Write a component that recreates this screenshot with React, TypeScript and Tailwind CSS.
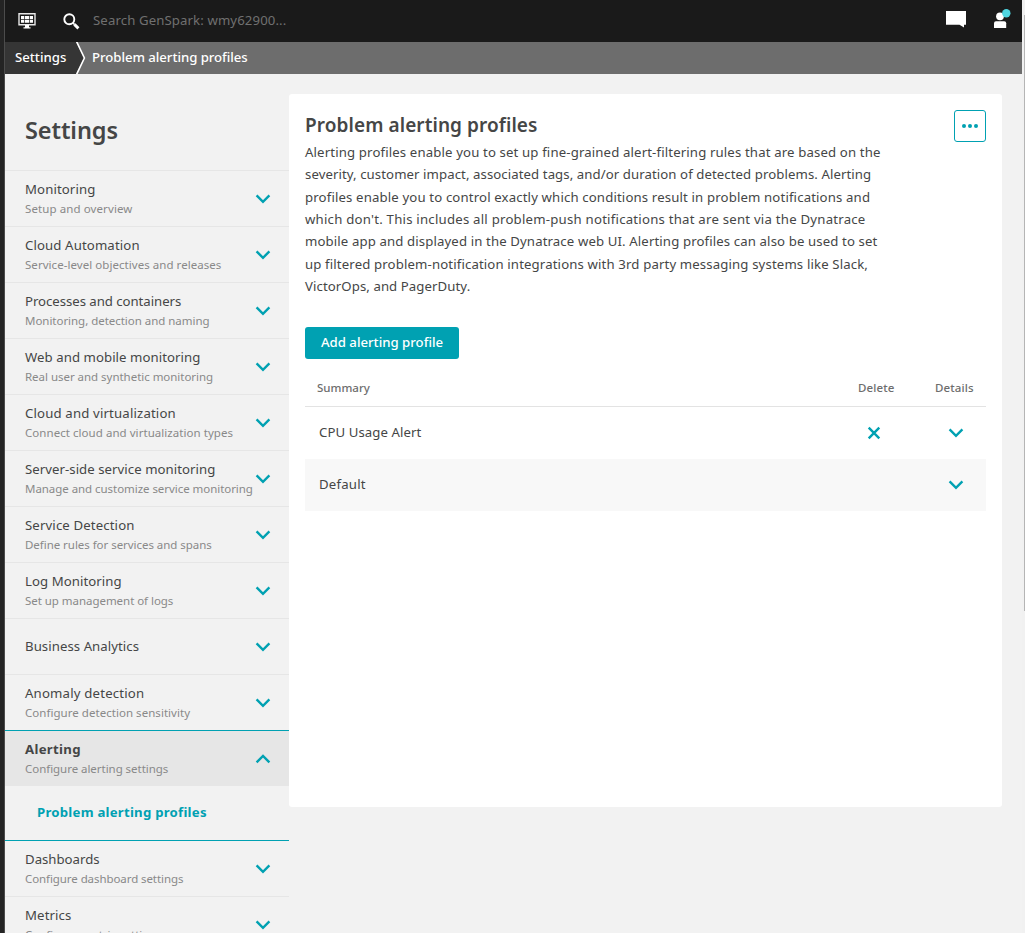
import React from "react";

type Item = { title: string; sub?: string; open?: boolean; after?: boolean; t?: string; s?: string };

const items: Item[] = [
  { title: "Monitoring", sub: "Setup and overview", t: "tracking-[0.1px]", s: "tracking-[0.1px]" },
  { title: "Cloud Automation", sub: "Service-level objectives and releases", t: "tracking-[0.12px]", s: "tracking-[0.05px]" },
  { title: "Processes and containers", sub: "Monitoring, detection and naming", t: "tracking-[-0.04px]", s: "tracking-[-0.03px]" },
  { title: "Web and mobile monitoring", sub: "Real user and synthetic monitoring", t: "tracking-[0.06px]", s: "tracking-[-0.03px]" },
  { title: "Cloud and virtualization", sub: "Connect cloud and virtualization types", t: "tracking-[0.16px]", s: "tracking-[0.05px]" },
  { title: "Server-side service monitoring", sub: "Manage and customize service monitoring", t: "tracking-[0.05px]", s: "tracking-[-0.05px]" },
  { title: "Service Detection", sub: "Define rules for services and spans", t: "tracking-[0.13px]", s: "tracking-[-0.04px]" },
  { title: "Log Monitoring", sub: "Set up management of logs", t: "tracking-[0.06px]", s: "tracking-[-0.04px]" },
  { title: "Business Analytics", t: "tracking-[0.06px]" },
  { title: "Anomaly detection", sub: "Configure detection sensitivity", t: "tracking-[0.18px]", s: "tracking-[0.04px]" },
  { title: "Alerting", sub: "Configure alerting settings", open: true, t: "tracking-[0.3px]", s: "tracking-[-0.04px]" },
  { title: "Dashboards", sub: "Configure dashboard settings", after: true, s: "tracking-[-0.08px]" },
  { title: "Metrics", sub: "Configure metric settings", t: "tracking-[0.12px]" },
];

const description = [
  { text: "Alerting profiles enable you to set up fine-grained alert-filtering rules that are based on the", t: "tracking-[0.138px]" },
  { text: "severity, customer impact, associated tags, and/or duration of detected problems. Alerting", t: "tracking-[0.08px]" },
  { text: "profiles enable you to control exactly which conditions result in problem notifications and", t: "tracking-[0.143px]" },
  { text: "which don't. This includes all problem-push notifications that are sent via the Dynatrace", t: "tracking-[0.227px]" },
  { text: "mobile app and displayed in the Dynatrace web UI. Alerting profiles can also be used to set", t: "tracking-[0.12px]" },
  { text: "up filtered problem-notification integrations with 3rd party messaging systems like Slack,", t: "tracking-[0.135px]" },
  { text: "VictorOps, and PagerDuty.", t: "tracking-[0.08px]" },
];

function Chevron({ up = false }: { up?: boolean }) {
  return (
    <svg width="16" height="10" viewBox="0 0 16 10" className="shrink-0" fill="none" stroke="#00a1b2" strokeWidth="2.4">
      <path d={up ? "M1.6 8.4 8 2l6.4 6.4" : "M1.6 1.4 8 7.8l6.4-6.4"} />
    </svg>
  );
}

function SideItem({ item }: { item: Item }) {
  const border = item.open || item.after ? "border-[#00a1b2]" : "border-[#e6e6e6]";
  return (
    <li>
      <button
        className={`flex h-14 w-full items-center justify-between border-t pr-[18px] pl-5 text-left ${border} ${item.open ? "bg-[#e6e6e6]" : ""}`}
      >
        <span className="flex flex-col whitespace-nowrap">
          <span className={`text-[13.2px] leading-5 ${item.t ?? ""} ${item.open ? "font-bold" : ""} ${item.sub ? "" : "pb-0.5"}`}>
            {item.title}
          </span>
          {item.sub && <span className={`w-0 text-[11.5px] leading-5 text-[#898989] ${item.s ?? ""}`}>{item.sub}</span>}
        </span>
        <Chevron up={item.open} />
      </button>
      {item.open && (
        <a className="flex h-[54px] items-center pl-8 text-[13.2px] font-bold tracking-[0.24px] whitespace-nowrap text-[#00a1b2]">
          Problem alerting profiles
        </a>
      )}
    </li>
  );
}

function Header() {
  return (
    <header className="flex h-[42px] shrink-0 items-center bg-[#1a1a1a] text-white">
      <svg className="ml-[13px]" width="18" height="16" viewBox="0 0 18 16" fill="none">
        <path d="M1 .8h16v11H1z" stroke="#e8e8e8" strokeWidth="1.4" />
        <path d="M3 3h3v3H3zM6.700 3H11v3H6.700zM11.700 3H15v3h-3.300zM3 6.800h3v2.900H3zM6.700 6.800H11v2.900H6.700zM11.700 6.800H15v2.900h-3.300zM7 12h4v2.200h1.500v1.300h-7v-1.300H7z" fill="#fff" />
      </svg>
      <svg className="ml-[27px]" width="17" height="17" viewBox="0 0 17 17" fill="none" stroke="#fff">
        <circle cx="6.300" cy="6.300" r="5" strokeWidth="1.900" />
        <path d="m9.800 9.800 1.800 1.800" strokeWidth="1.600" />
        <path d="m11.400 11.400 4 4" strokeWidth="2.900" />
      </svg>
      <span className="ml-[13px] text-[13.2px] tracking-[0.11px] whitespace-nowrap text-[#707070]">
        Search GenSpark: wmy62900...
      </span>
      <svg className="mt-[-4px] ml-auto" width="20" height="17" viewBox="0 0 20 17" fill="#fff">
        <path d="M0 0h20v13.800h-2V16.500l-4.500-2.700H0z" />
      </svg>
      <svg className="mt-[-5px] mr-[11px] ml-[28px]" width="17" height="20" viewBox="0 0 17 20">
        <circle cx="6" cy="7.300" r="3.900" fill="#fff" />
        <path d="M0 19v-4.800Q0 12.200 2 12.200h8.200q2 0 2 2V19z" fill="#fff" />
        <circle cx="12.300" cy="4.300" r="4.200" fill="#4fd5e0" />
      </svg>
    </header>
  );
}

export default function App() {
  return (
    <div className="flex h-[933px] w-[1025px] overflow-hidden bg-[#f2f2f2] font-['Noto_Sans',sans-serif] text-[#454646]">
      <div className="w-[5px] shrink-0 border-r border-[#4c4c4c] bg-[#242424]" />
      <div className="flex w-[1017px] shrink-0 flex-col">
        <Header />
        <nav className="flex h-8 shrink-0 bg-[#6d6d6d] text-[13.2px] leading-[30px] font-medium whitespace-nowrap text-white">
          <div className="w-[71px] bg-[#353535] pl-2.5">Settings</div>
          <svg width="10" height="32" viewBox="0 0 10 32">
            <path d="M0 0l8 16-8 16z" fill="#353535" />
            <path d="M0.300-1 8.400 16 0.300 33" fill="none" stroke="#fff" strokeWidth="1.600" />
          </svg>
          <div className="ml-1.5 tracking-[-0.04px]">Problem alerting profiles</div>
        </nav>
        <div className="flex min-h-0 flex-1">
          <aside className="w-[284px] shrink-0">
            <h1 className="h-24 pt-[38px] pl-5 text-[23.5px] leading-9 font-semibold tracking-[-0.1px]">Settings</h1>
            <ul>
              {items.map((item) => (
                <SideItem key={item.title} item={item} />
              ))}
            </ul>
          </aside>
          <main className="mt-5 h-[713px] w-[713px] shrink-0 rounded-[3px] bg-white px-4 pt-4">
            <div className="flex h-8 justify-between">
              <h2 className="text-[19px] leading-[30px] font-semibold tracking-[0.08px] whitespace-nowrap">
                Problem alerting profiles
              </h2>
              <button className="flex size-8 items-center justify-center gap-[2px] rounded-[3px] border border-[#00a1b2]">
                <span className="size-1 rounded-full bg-[#00a1b2]" />
                <span className="size-1 rounded-full bg-[#00a1b2]" />
                <span className="size-1 rounded-full bg-[#00a1b2]" />
              </button>
            </div>
            <p className="-mt-px h-[186px] text-[13.2px] leading-[22.35px] whitespace-nowrap">
              {description.map((line) => (
                <span key={line.text} className={`block ${line.t}`}>{line.text}</span>
              ))}
            </p>
            <button className="flex h-8 w-[154px] items-center justify-center rounded-[3px] bg-[#00a1b2] text-[13.2px] font-medium whitespace-nowrap text-white">
              Add alerting profile
            </button>
            <div className="flex h-12 items-center border-b border-[#e3e3e3] pt-[11px] pl-3 text-[11.5px] font-medium text-[#6d6d6d]">
              <span className="w-[541px]">Summary</span>
              <span className="w-[77px] tracking-[0.15px]">Delete</span>
              <span className="tracking-[0.15px]">Details</span>
            </div>
            <div className="flex h-[52px] items-center pr-[22px] pl-3.5 text-[13.2px]">
              <span className="flex-1 tracking-[0.08px]">CPU Usage Alert</span>
              <svg className="mr-[67px]" width="14" height="14" viewBox="0 0 14 14" stroke="#00a1b2" strokeWidth="2.4">
                <path d="m1.700 1.700 10.600 10.600m0-10.600L1.700 12.300" />
              </svg>
              <Chevron />
            </div>
            <div className="flex h-[52px] items-center bg-[#f8f8f8] pr-[22px] pl-3.5 text-[13.2px]">
              <span className="flex-1 tracking-[0.2px]">Default</span>
              <Chevron />
            </div>
          </main>
        </div>
      </div>
      <div className="flex w-[3px] justify-end bg-[#f1f1f1]">
        <div className="mt-[15px] h-[596px] w-px bg-[#b5b5b5]" />
      </div>
    </div>
  );
}
